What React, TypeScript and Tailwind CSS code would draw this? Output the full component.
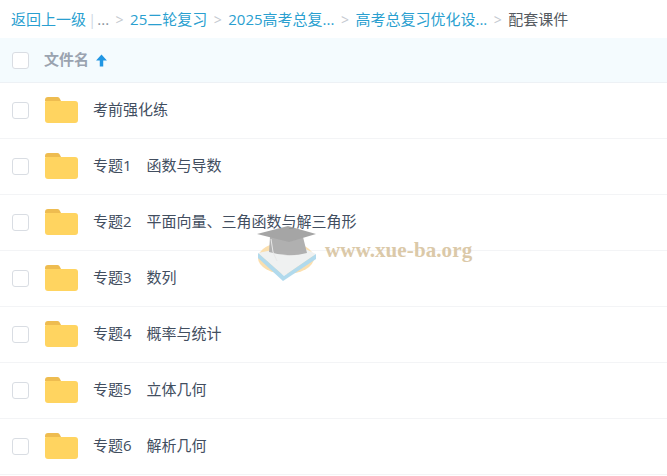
import React from 'react'

const rows = [
  '考前强化练',
  '专题1　函数与导数',
  '专题2　平面向量、三角函数与解三角形',
  '专题3　数列',
  '专题4　概率与统计',
  '专题5　立体几何',
  '专题6　解析几何',
]

const crumbs = ['25二轮复习', '2025高考总复...', '高考总复习优化设...']

const Check = () => (
  <span className="block w-[17px] h-[17px] rounded-[3px] border border-[#d9dde3] bg-white shrink-0" />
)

const Folder = () => (
  <svg width="33" height="26" viewBox="0 0 33 26" className="block shrink-0">
    <path d="M0 3a3 3 0 0 1 3-3h9a3 3 0 0 1 3 2l1 2H0z" fill="#eebc50" />
    <path d="M0 5a1 1 0 0 1 1-1h29a3 3 0 0 1 3 3v16a3 3 0 0 1-3 3H3a3 3 0 0 1-3-3z" fill="#ffd460" />
  </svg>
)

const Sep = () => <span className="mx-[6.5px] text-[#c4c9d0] text-[14px]">&gt;</span>

const Watermark = () => (
  <div className="absolute left-[257px] top-[225px] flex items-start opacity-90">
    <svg width="62" height="58" viewBox="0 0 62 58">
      <ellipse cx="29" cy="33" rx="28" ry="16" fill="#fbdca6" />
      <path d="M1 28 L27 51 L59 29 L40 20 Z" fill="#eef0f0" />
      <path d="M1 28 L1 33 L26 56 L59 34 L59 29 L27 51 Z" fill="#a9d6ec" />
      <path d="M13 12 L46 12 L50 28 Q31 33 12 27 Z" fill="#a8a8a8" />
      <path d="M0 9 L31 1 L59 9 L32 17 Z" fill="#9c9c9c" />
      <path d="M14 14 L16 27 L20 36" fill="none" stroke="#e6e6e6" strokeWidth="1" />
    </svg>
    <span className="ml-[6px] mt-[15px] text-[21px] font-bold text-[#d8c4a0] font-['Liberation_Serif',serif] leading-none tracking-[0.1px]">
      www.xue-ba.org
    </span>
  </div>
)

export default function App() {
  return (
    <div className="relative w-[667px] h-[476px] overflow-hidden bg-white font-['Open_Sans','Noto_Sans_CJK_SC',sans-serif] text-[15px]">
      {/* breadcrumb */}
      <div className="h-[38px] pl-[11px] flex items-center whitespace-nowrap text-[#2a9fd0] pt-[1px]">
        <span>返回上一级</span>
        <span className="ml-[2px] mr-[1px] text-[#cfd8e3]">|</span>
        <span className="text-[#8a929c]">...</span>
        {crumbs.map((c) => (
          <React.Fragment key={c}>
            <Sep />
            <span>{c}</span>
          </React.Fragment>
        ))}
        <Sep />
        <span className="text-[#555a60]">配套课件</span>
      </div>

      {/* header */}
      <div className="h-[45px] bg-[#f4fbfe] border-b border-[#edf1f5] pl-[12px] flex items-center">
        <Check />
        <span className="ml-[15px] pb-[2px] font-bold text-[#9aa3b0]">文件名</span>
        <svg width="13" height="13" viewBox="0 0 12 12" className="ml-[6px]">
          <path d="M6 0.5 L11 6 H7.6 V11.5 H4.4 V6 H1 Z" fill="#2196e3" />
        </svg>
      </div>

      {/* rows */}
      {rows.map((r) => (
        <div key={r} className="h-[56px] border-b border-[#f3f4f6] pl-[12px] flex items-center">
          <Check />
          <span className="ml-[16px] pb-[1px]"><Folder /></span>
          <span className="ml-[15px] pb-[3px] text-[#424e5f]">{r}</span>
        </div>
      ))}

      <Watermark />
    </div>
  )
}
